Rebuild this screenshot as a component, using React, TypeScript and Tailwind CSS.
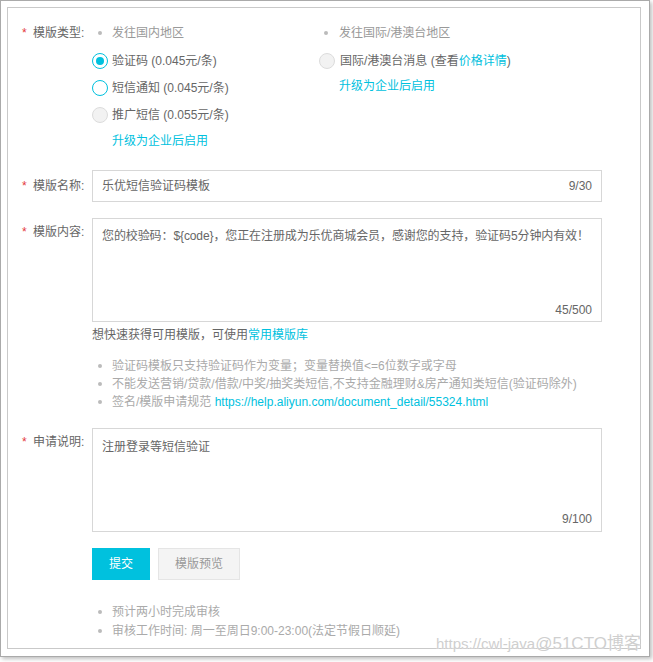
import React from "react";

const font = { fontFamily: '"Liberation Sans", "Noto Sans CJK SC", sans-serif' };

function Label({ text }: { text: string }) {
  return (
    <div className="w-[84px] shrink-0 pl-[14px] flex items-center text-[12px] text-[#666]">
      <span className="text-[#e4393c] w-[11px]">*</span>
      <span>{text}</span>
    </div>
  );
}

function Dot() {
  return <span className="inline-block w-[4px] h-[4px] rounded-full bg-[#bbb] shrink-0" />;
}

function Radio({ state }: { state: "checked" | "open" | "disabled" }) {
  if (state === "disabled")
    return <span className="w-[16px] h-[16px] rounded-full border border-[#dcdcdc] bg-[#f2f2f2] shrink-0" />;
  return (
    <span className="w-[16px] h-[16px] rounded-full border border-[#00c1de] bg-white shrink-0 flex items-center justify-center">
      {state === "checked" && <span className="w-[8px] h-[8px] rounded-full bg-[#00c1de]" />}
    </span>
  );
}

export default function App() {
  const rules = [
    "验证码模板只支持验证码作为变量；变量替换值<=6位数字或字母",
    "不能发送营销/贷款/借款/中奖/抽奖类短信,不支持金融理财&房产通知类短信(验证码除外)",
  ];

  return (
    <div style={font} className="w-[653px] h-[662px] bg-white relative">
      <div className="w-[650px] h-[657px] border border-[#aaa] shadow-[2px_2px_4px_rgba(0,0,0,0.25)] pl-[6px] pt-[6px]">
        <div className="w-[634px] h-[642px] border border-[#c9c9c9] pt-[15px] text-[12px]">
          {/* 模版类型 */}
          <div className="flex">
            <div className="h-[20px] flex">
              <Label text="模版类型:" />
            </div>
            <div className="w-[227px]">
              <div className="h-[20px] flex items-center gap-[10px] pl-[6px] text-[#999]">
                <Dot />
                <span>发往国内地区</span>
              </div>
              <div className="mt-[4px]">
                <div className="h-[27px] flex items-center gap-[4px] text-[#666]">
                  <Radio state="checked" />
                  <span>验证码 (0.045元/条)</span>
                </div>
                <div className="h-[27px] flex items-center gap-[4px] text-[#666]">
                  <Radio state="open" />
                  <span>短信通知 (0.045元/条)</span>
                </div>
                <div className="h-[27px] flex items-center gap-[4px] text-[#666]">
                  <Radio state="disabled" />
                  <span>推广短信 (0.055元/条)</span>
                </div>
              </div>
              <div className="mt-[3px] h-[20px] leading-[20px] pl-[20px] text-[#00c1de]">升级为企业后启用</div>
            </div>
            <div>
              <div className="h-[20px] flex items-center gap-[11px] pl-[5px] text-[#999]">
                <Dot />
                <span>发往国际/港澳台地区</span>
              </div>
              <div className="mt-[4px] h-[27px] flex items-center gap-[5px] text-[#666]">
                <Radio state="disabled" />
                <span>
                  国际/港澳台消息 (查看<span className="text-[#00c1de]">价格详情</span>)
                </span>
              </div>
              <div className="mt-[2px] h-[20px] leading-[20px] pl-[20px] text-[#00c1de]">升级为企业后启用</div>
            </div>
          </div>

          {/* 模版名称 */}
          <div className="flex mt-[19px]">
            <Label text="模版名称:" />
            <div className="w-[510px] h-[32px] border border-[#d7d7d7] flex items-center justify-between pl-[9px] pr-[9px] text-[#666]">
              <span>乐优短信验证码模板</span>
              <span>9/30</span>
            </div>
          </div>

          {/* 模版内容 */}
          <div className="flex mt-[16px]">
            <div className="pt-[7px] h-[20px] flex">
              <Label text="模版内容:" />
            </div>
            <div className="w-[510px] h-[104px] border border-[#d7d7d7] flex flex-col justify-between pl-[9px] pr-[6px] pt-[8px] pb-[2px] text-[#666]">
              <div className="leading-[18px] whitespace-nowrap tracking-[-0.1px]">您的校验码：${"{code}"}，您正在注册成为乐优商城会员，感谢您的支持，验证码5分钟内有效！</div>
              <div className="text-right leading-[18px] pr-[3px]">45/500</div>
            </div>
          </div>

          <div className="ml-[84px] mt-[3px] h-[20px] leading-[20px] text-[#666]">
            想快速获得可用模版，可使用<span className="text-[#00c1de]">常用模版库</span>
          </div>

          <div className="ml-[84px] mt-[12px] text-[#aaa]">
            {rules.map((r) => (
              <div key={r} className="h-[18px] flex items-center gap-[10px] pl-[6px]">
                <Dot />
                <span>{r}</span>
              </div>
            ))}
            <div className="h-[18px] flex items-center gap-[10px] pl-[6px]">
              <Dot />
              <span>
                签名/模版申请规范 <span className="text-[#00c1de]">https://help.aliyun.com/document_detail/55324.html</span>
              </span>
            </div>
          </div>

          {/* 申请说明 */}
          <div className="flex mt-[17px]">
            <div className="pt-[8px] h-[20px] flex">
              <Label text="申请说明:" />
            </div>
            <div className="w-[510px] h-[104px] border border-[#d7d7d7] flex flex-col justify-between pl-[9px] pr-[9px] pt-[9px] pb-[3px] text-[#666]">
              <div className="leading-[18px]">注册登录等短信验证</div>
              <div className="text-right leading-[18px]">9/100</div>
            </div>
          </div>

          <div className="ml-[84px] mt-[16px] flex gap-[8px]">
            <button className="w-[58px] h-[32px] bg-[#00c1de] text-white text-[12px]">提交</button>
            <button className="w-[82px] h-[32px] bg-[#f4f4f4] border border-[#e5e5e5] text-[#999] text-[12px]">模版预览</button>
          </div>

          <div className="ml-[84px] mt-[22px] text-[#aaa]">
            <div className="h-[19px] flex items-center gap-[10px] pl-[6px]">
              <Dot />
              <span>预计两小时完成审核</span>
            </div>
            <div className="h-[19px] flex items-center gap-[10px] pl-[6px]">
              <Dot />
              <span>审核工作时间: 周一至周日9:00-23:00(法定节假日顺延)</span>
            </div>
          </div>
        </div>
      </div>

      <div className="absolute left-[436px] top-[631px] flex items-baseline text-[#cfcfcf] whitespace-nowrap [text-shadow:0_0_1px_#fff]">
        <span className="text-[15px]">https://cwl-java</span>
        <span className="text-[17px]">@51CTO博客</span>
      </div>
    </div>
  );
}
